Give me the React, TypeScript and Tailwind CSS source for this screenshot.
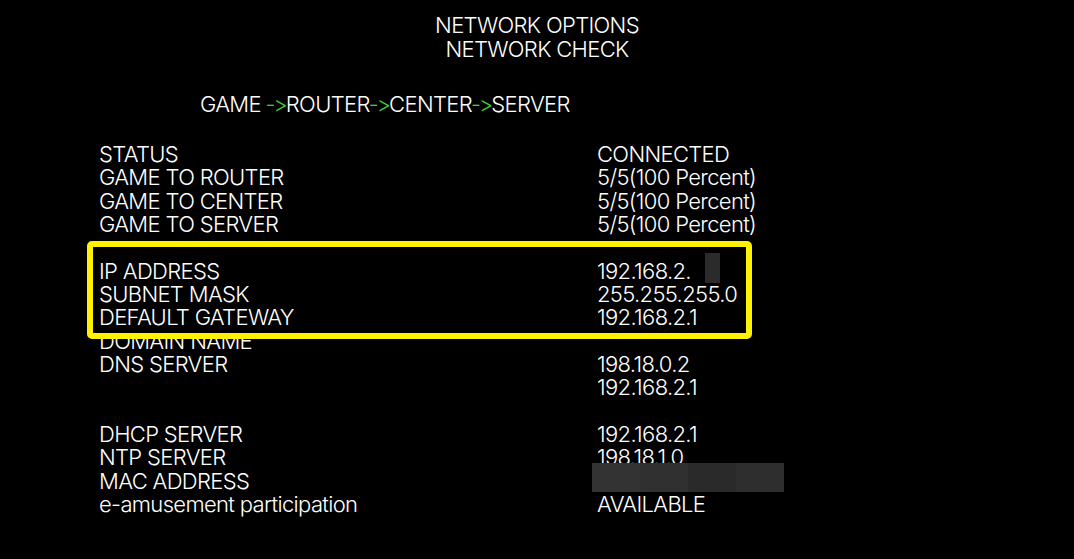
import React from 'react';

type Row = { label: string; value?: string };

const ROWS: Row[] = [
  { label: 'STATUS', value: 'CONNECTED' },
  { label: 'GAME TO ROUTER', value: '5/5(100 Percent)' },
  { label: 'GAME TO CENTER', value: '5/5(100 Percent)' },
  { label: 'GAME TO SERVER', value: '5/5(100 Percent)' },
  { label: '' },
  { label: 'IP ADDRESS', value: '192.168.2.' },
  { label: 'SUBNET MASK', value: '255.255.255.0' },
  { label: 'DEFAULT GATEWAY', value: '192.168.2.1' },
  { label: 'DOMAIN NAME' },
  { label: 'DNS SERVER', value: '198.18.0.2' },
  { label: '', value: '192.168.2.1' },
  { label: '' },
  { label: 'DHCP SERVER', value: '192.168.2.1' },
  { label: 'NTP SERVER', value: '198.18.1.0' },
  { label: 'MAC ADDRESS' },
  { label: 'e-amusement participation', value: 'AVAILABLE' },
];

const Arrow: React.FC = () => (
  <span className="-ml-[1px] inline-block tracking-[-2px] text-[#39d33a]">-&gt;</span>
);

const App: React.FC = () => {
  return (
    <div
      className="relative h-[559px] w-[1074px] overflow-hidden bg-black text-[22px] font-light text-white tracking-[-0.03em]"
      style={{ fontFamily: 'Inter, "Liberation Sans", sans-serif' }}
    >
      <div className="pt-[13px] text-center leading-[24px]">
        <div>NETWORK OPTIONS</div>
        <div>NETWORK CHECK</div>
      </div>

      <div className="mt-[31px] pl-[200px] leading-[24px]">
        GAME <Arrow />ROUTER<Arrow />CENTER<Arrow />SERVER
      </div>

      <div className="mt-[27px] grid grid-cols-[498px_1fr] pl-[99px] leading-[23.33px]">
        {ROWS.map((row, i) => (
          <React.Fragment key={i}>
            <div className="h-[23.33px] whitespace-nowrap">{row.label}</div>
            <div className="h-[23.33px] whitespace-nowrap">{row.value}</div>
          </React.Fragment>
        ))}
      </div>

      {/* highlight box */}
      <div className="absolute left-[87px] top-[241px] h-[98px] w-[665px] rounded-[5px] border-[6px] border-[#fff200]" />

      {/* blurred bits */}
      <div className="absolute left-[705px] top-[253px] h-[30px] w-[15px] bg-[#2b2b2b]" />
      <div className="absolute left-[592px] top-[463px] flex h-[29px] w-[192px]">
        <div className="flex-1 bg-[#333333]" />
        <div className="flex-1 bg-[#303030]" />
        <div className="flex-1 bg-[#2a2a2a]" />
        <div className="flex-1 bg-[#2e2e2e]" />
      </div>
    </div>
  );
};

export default App;
